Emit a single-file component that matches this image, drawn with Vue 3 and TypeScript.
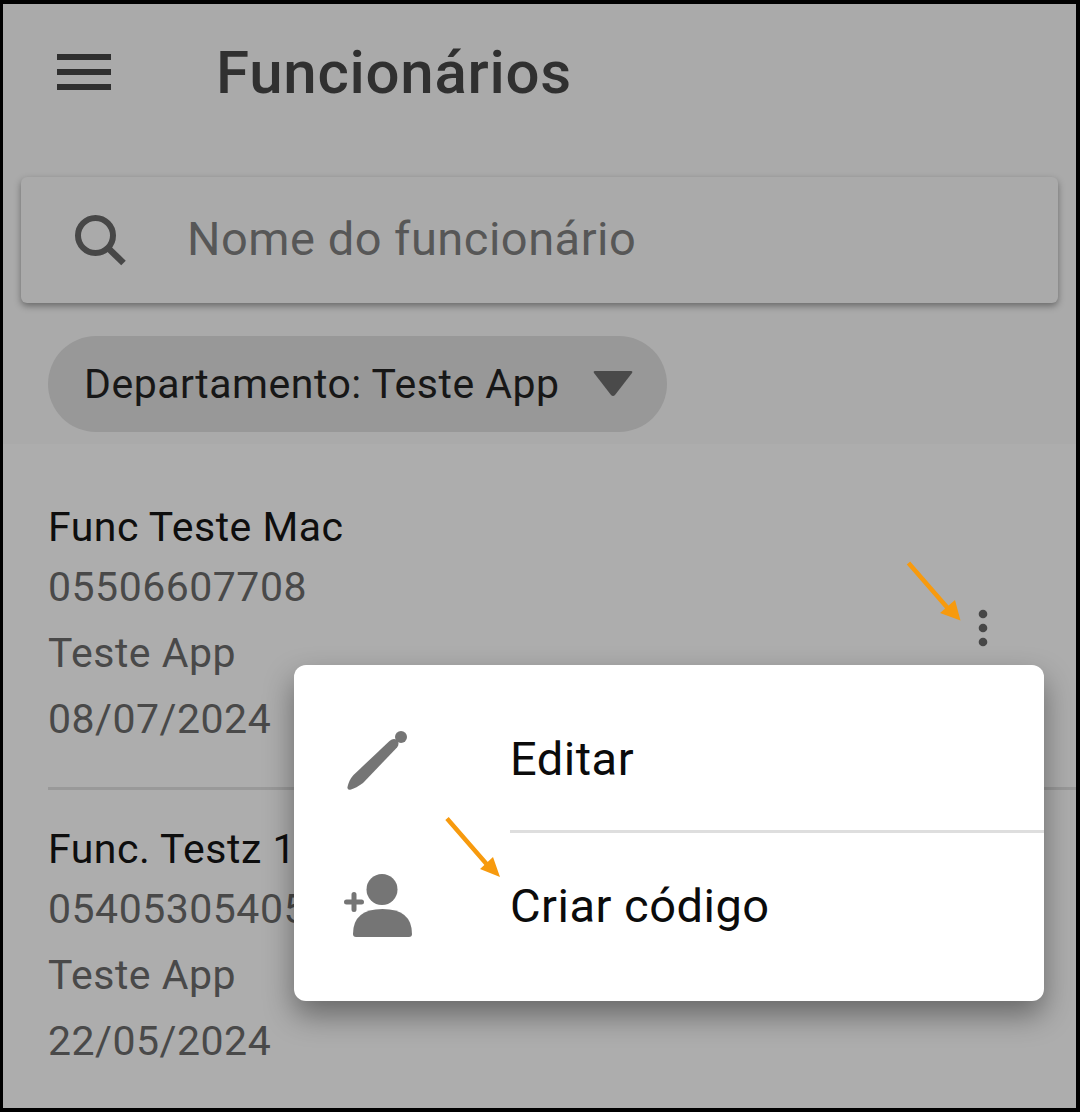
<script setup lang="ts">
interface Employee {
  name: string
  doc: string
  dept: string
  date: string
}
const employees: Employee[] = [
  { name: 'Func Teste Mac', doc: '05506607708', dept: 'Teste App', date: '08/07/2024' },
  { name: 'Func. Testz 1', doc: '05405305405', dept: 'Teste App', date: '22/05/2024' },
]
</script>

<template>
  <div class="frame">
    <header class="top">
      <div class="appbar">
        <svg class="menu-icon" width="55" height="38" viewBox="0 0 55 38"><path d="M0 0h54v6H0zM0 15h54v6H0zM0 30h54v6H0z" fill="#2f2f2f" /></svg>
        <h1>Funcionários</h1>
      </div>
      <div class="search">
        <svg width="54" height="54" viewBox="0 0 54 54"><circle cx="21.500" cy="22.500" r="17.500" fill="none" stroke="#474747" stroke-width="6" /><path d="M34 35l15.500 15" stroke="#474747" stroke-width="6.500" fill="none" /></svg>
        <span>Nome do funcionário</span>
      </div>
      <div class="chip">
        <span>Departamento: Teste App</span>
        <svg width="42" height="28" viewBox="0 0 42 28"><path d="M3 1h36q2 0 1 2L23 25q-2 2-4 0L2 3Q1 1 3 1z" fill="#4a4a4a" /></svg>
      </div>
    </header>

    <section class="list">
      <article v-for="e in employees" :key="e.doc" class="row">
        <div class="name">{{ e.name }}</div>
        <div class="doc">{{ e.doc }}</div>
        <div class="line">{{ e.dept }}</div>
        <div class="line">{{ e.date }}</div>
      </article>
    </section>

    <svg class="kebab" width="14" height="40" viewBox="0 0 14 40"><circle cx="7" cy="6" r="4.300" fill="#474747" /><circle cx="7" cy="20" r="4.300" fill="#474747" /><circle cx="7" cy="34" r="4.300" fill="#474747" /></svg>

    <div class="popup">
      <div class="item">
        <div class="item-icon">
          <svg width="66" height="62" viewBox="0 0 66 62"><path d="M45.500 12Q49.500 8.500 53 11Q56 14.500 53 18.500L19 54Q12 59 7 60.500Q3 61.500 3.500 58Q5 51 9.500 46Z" fill="#757575" /><circle cx="57" cy="8" r="6" fill="#757575" /></svg>
        </div>
        <div class="item-label">Editar</div>
      </div>
      <div class="item">
        <div class="item-icon">
          <svg width="70" height="66" viewBox="0 0 70 66"><circle cx="38" cy="16.500" r="15.500" fill="#757575" /><path d="M9 61Q9 36 38.500 36T68 61Q68 64 65 64H12Q9 64 9 61Z" fill="#757575" /><path d="M2.500 29H17.500M10 21.500V36.500" stroke="#757575" stroke-width="5" stroke-linecap="round" fill="none" /></svg>
        </div>
        <div class="item-label second">Criar código</div>
      </div>
    </div>

    <svg class="arrows" width="1080" height="1112" viewBox="0 0 1080 1112">
      <path d="M908.500 563l40 46M447 818.500l40 46" stroke="#f79a0e" stroke-width="4.500" fill="none" />
      <path d="M960.500 620.500L955 600 940 613zM500 877L493 857 480 869z" fill="#f79a0e" />
    </svg>
  </div>
</template>

<style scoped>
.frame {
  position: relative;
  width: 1080px;
  height: 1112px;
  box-sizing: border-box;
  border: solid #000;
  border-width: 4px 4px 4px 3px;
  background: #adadad;
  overflow: hidden;
  font-family: Roboto, "Liberation Sans", sans-serif;
  letter-spacing: 0.5px;
}
.top {
  height: 440px;
  background: #aaa;
}
.appbar {
  display: flex;
  align-items: center;
  height: 138px;
  padding-left: 54px;
}
h1 {
  margin: 0 0 0 104px;
  font-size: 60px;
  font-weight: 500;
  letter-spacing: 0.75px;
  line-height: 138px;
  color: #303030;
}
.search {
  display: flex;
  align-items: center;
  gap: 59px;
  height: 126px;
  margin: 35px 18px 0;
  padding-left: 53px;
  box-sizing: border-box;
  background: #aaa;
  border-radius: 6px;
  box-shadow: 0 3px 7px rgba(0, 0, 0, 0.38);
  font-size: 47px;
  color: #575757;
}
.search span {
  padding-bottom: 3px;
}
.chip {
  display: inline-flex;
  align-items: center;
  gap: 32px;
  height: 96px;
  margin: 33px 0 0 45px;
  padding: 0 33px 0 36px;
  background: #989898;
  border-radius: 48px;
  font-size: 41px;
  color: #171717;
}
.list {
  padding-left: 45px;
}
.row {
  height: 346px;
  box-sizing: border-box;
  padding-top: 57px;
  border-bottom: 3px solid #999;
}
.row + .row {
  padding-top: 33px;
  border-bottom: 0;
}
.name {
  font-size: 41px;
  line-height: 52px;
  color: #0e0e0e;
}
.doc,
.line {
  font-size: 41px;
  line-height: 66px;
  color: #494949;
}
.doc {
  margin-top: 1px;
}
.kebab {
  position: absolute;
  left: 973px;
  top: 604px;
}
.popup {
  position: absolute;
  left: 291px;
  top: 661px;
  width: 750px;
  height: 336px;
  padding-top: 22px;
  box-sizing: border-box;
  background: #fff;
  border-radius: 12px;
  box-shadow: 0 14px 30px rgba(0, 0, 0, 0.4);
}
.item {
  display: flex;
  height: 146px;
}
.item-icon {
  display: flex;
  align-items: center;
  width: 216px;
  padding-left: 50px;
  box-sizing: border-box;
}
.item-label {
  flex: 1;
  display: flex;
  align-items: center;
  font-size: 47px;
  color: #0b0b0b;
}
.item-label.second {
  padding-bottom: 2px;
}
.item:first-child .item-label {
  border-bottom: 3px solid #dedede;
}
.arrows {
  position: absolute;
  left: -3px;
  top: -4px;
  pointer-events: none;
}
</style>
